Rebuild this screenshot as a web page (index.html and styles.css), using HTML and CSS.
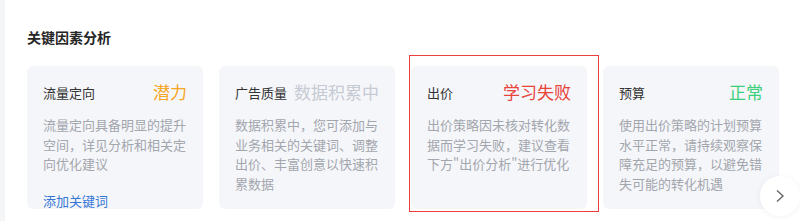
FILE: index.html
```html
<!DOCTYPE html>
<html lang="zh-CN">
  <head>
    <meta charset="UTF-8" />
    <meta name="viewport" content="width=device-width, initial-scale=1.0" />
    <title>关键因素分析</title>
    <link rel="stylesheet" href="styles.css">
  </head>
  <body>
    <div class="panel">
      <h3 class="section-title">关键因素分析</h3>
      <div class="factor-list">
        <div class="factor-card">
          <div class="factor-head">
            <span class="factor-name">流量定向</span>
            <span class="factor-status status-potential">潜力</span>
          </div>
          <p class="factor-desc">流量定向具备明显的提升空间，详见分析和相关定向优化建议</p>
          <a href="#" class="factor-link">添加关键词</a>
        </div>
        <div class="factor-card">
          <div class="factor-head">
            <span class="factor-name">广告质量</span>
            <span class="factor-status status-pending">数据积累中</span>
          </div>
          <p class="factor-desc">数据积累中，您可添加与业务相关的关键词、调整出价、丰富创意以快速积累数据</p>
        </div>
        <div class="factor-card is-marked">
          <div class="factor-head">
            <span class="factor-name">出价</span>
            <span class="factor-status status-failed">学习失败</span>
          </div>
          <p class="factor-desc">出价策略因未核对转化数据而学习失败，建议查看下方"出价分析"进行优化</p>
        </div>
        <div class="factor-card">
          <div class="factor-head">
            <span class="factor-name">预算</span>
            <span class="factor-status status-normal">正常</span>
          </div>
          <p class="factor-desc">使用出价策略的计划预算水平正常，请持续观察保障充足的预算，以避免错失可能的转化机遇</p>
          <button class="next-btn" aria-label="下一页">
            <svg width="12" height="14" viewBox="0 0 12 14">
              <path d="M3 1.5 L9 7 L3 12.5" fill="none" stroke="#666" stroke-width="1.4" />
            </svg>
          </button>
        </div>
      </div>
    </div>
  </body>
</html>
```

FILE: styles.css
```css
body {
  margin: 0;
  padding: 0;
  background: #f4f5f7;
  font-family: "Noto Sans CJK SC", "Noto Sans", sans-serif;
}
.panel {
  margin-left: 5px;
  background: #fff;
  height: 221px;
  padding: 27px 0 0 22px;
  box-sizing: border-box;
  overflow: hidden;
}
.section-title {
  margin: 0;
  font-size: 14px;
  line-height: 20px;
  font-weight: bold;
  color: #262626;
}
.factor-list {
  display: flex;
  gap: 16px;
  margin-top: 19px;
}
.factor-card {
  position: relative;
  flex: 0 0 176px;
  height: 143px;
  box-sizing: border-box;
  padding: 14px 16px 0 16px;
  background: #f5f6fa;
  border-radius: 6px;
}
.factor-card.is-marked::after {
  content: "";
  position: absolute;
  left: -2px;
  top: -11px;
  right: -12px;
  bottom: -3px;
  border: 1.5px solid #ee3f3f;
  pointer-events: none;
}
.factor-head {
  display: flex;
  align-items: center;
  justify-content: space-between;
  height: 24px;
}
.factor-name {
  font-size: 13px;
  color: #333;
}
.factor-status {
  font-size: 17px;
  line-height: 24px;
}
.status-potential {
  color: #f5a623;
}
.status-pending {
  color: #c6cad2;
}
.status-failed {
  color: #e8443a;
}
.status-normal {
  color: #3ccf7c;
}
.factor-desc {
  margin: 11px 0 0;
  font-size: 13px;
  line-height: 19.5px;
  color: #a3a6ad;
}
.factor-link {
  display: block;
  margin-top: 17px;
  font-size: 13px;
  line-height: 20px;
  color: #3676d6;
  text-decoration: none;
}
.next-btn {
  position: absolute;
  left: 157px;
  top: 110px;
  width: 40px;
  height: 40px;
  border: none;
  border-radius: 50%;
  background: #fff;
  box-shadow: 0 1px 6px rgba(0, 0, 0, 0.06);
  display: flex;
  align-items: center;
  justify-content: center;
  padding: 0;
  cursor: pointer;
}
```
